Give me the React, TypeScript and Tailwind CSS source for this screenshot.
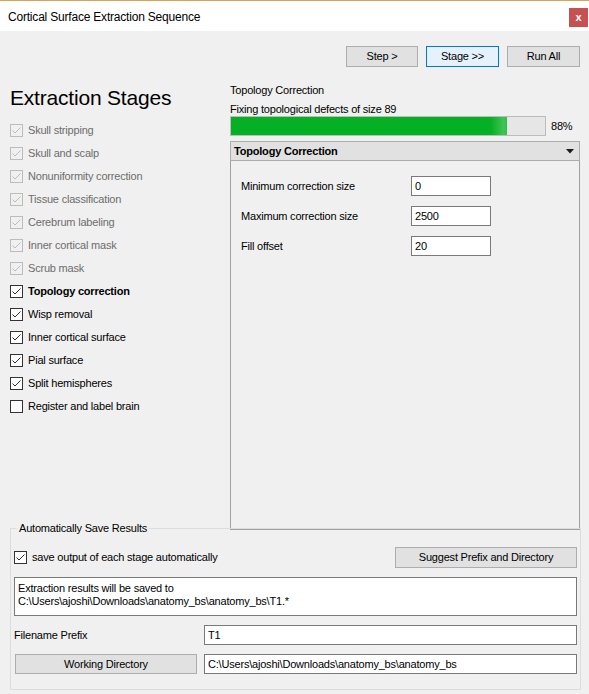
import clsx from "clsx";

const FONT = { fontFamily: '"Liberation Sans", Arial, sans-serif' };

type Stage = { label: string; done?: boolean; checked: boolean; current?: boolean };

const stages: Stage[] = [
  { label: "Skull stripping", done: true, checked: true },
  { label: "Skull and scalp", done: true, checked: true },
  { label: "Nonuniformity correction", done: true, checked: true },
  { label: "Tissue classification", done: true, checked: true },
  { label: "Cerebrum labeling", done: true, checked: true },
  { label: "Inner cortical mask", done: true, checked: true },
  { label: "Scrub mask", done: true, checked: true },
  { label: "Topology correction", checked: true, current: true },
  { label: "Wisp removal", checked: true },
  { label: "Inner cortical surface", checked: true },
  { label: "Pial surface", checked: true },
  { label: "Split hemispheres", checked: true },
  { label: "Register and label brain", checked: false },
];

const params = [
  { label: "Minimum correction size", value: "0" },
  { label: "Maximum correction size", value: "2500" },
  { label: "Fill offset", value: "20" },
];

function CheckBox({ checked, disabled }: { checked: boolean; disabled?: boolean }) {
  return (
    <span
      className={clsx(
        "flex h-[13px] w-[13px] shrink-0 items-center justify-center border",
        disabled ? "border-[#bcbcbc] bg-[#f0f0f0]" : "border-[#333333] bg-white"
      )}
    >
      {checked && (
        <svg width="11" height="11" viewBox="0 0 11 11" aria-hidden>
          <path
            d="M1.5 5.5 4 8l5.5-5.5"
            fill="none"
            stroke={disabled ? "#bcbcbc" : "#333333"}
            strokeWidth="1"
          />
        </svg>
      )}
    </span>
  );
}

function Button({
  children,
  className,
  focused,
}: {
  children: React.ReactNode;
  className?: string;
  focused?: boolean;
}) {
  return (
    <button
      className={clsx(
        "flex shrink-0 items-center justify-center border text-[11px] text-black",
        focused ? "border-[#0078d7] bg-[#e5f1fb]" : "border-[#adadad] bg-[#e1e1e1]",
        className
      )}
    >
      {children}
    </button>
  );
}

function Field({ value, className }: { value: string; className?: string }) {
  return (
    <div
      className={clsx(
        "flex h-[20px] items-center border border-[#7a7a7a] bg-white px-[3px] text-[11px] text-black",
        className
      )}
    >
      {value}
    </div>
  );
}

export default function App() {
  return (
    <div
      className="flex h-[694px] w-[589px] flex-col overflow-hidden bg-[#f0f0f0] text-[11px] tracking-[-0.2px] text-black"
      style={FONT}
    >
      {/* window title bar */}
      <div className="flex h-[31px] shrink-0 border-t border-[#d7a45b] bg-white">
        <span className="mt-[8px] pl-[8px] text-[12px] leading-[16px]">
          Cortical Surface Extraction Sequence
        </span>
        <span className="ml-auto mr-[1px] mt-[7px] flex h-[19px] w-[19px] items-center justify-center bg-[#c75050] text-[11px] font-bold leading-none text-white">
          x
        </span>
      </div>

      {/* run controls */}
      <div className="mt-[15px] flex h-[21px] justify-end gap-[8px] pr-[9px]">
        <Button className="w-[72px]">Step &gt;</Button>
        <Button className="w-[73px]" focused>
          Stage &gt;&gt;
        </Button>
        <Button className="w-[73px]">Run All</Button>
      </div>

      <div className="mt-[13px] flex h-[450px]">
        {/* stage list */}
        <div className="w-[230px] shrink-0 pl-[10px]">
          <h1 className="mt-[6px] text-[21px] leading-[24px] tracking-[-0.2px]">Extraction Stages</h1>
          <ul className="mt-[9px]">
            {stages.map((s) => (
              <li key={s.label} className="flex h-[23px] items-center gap-[5px]">
                <CheckBox checked={s.checked} disabled={s.done} />
                <span
                  className={clsx(
                    s.done && "text-[#6d6d6d]",
                    s.current && "font-bold"
                  )}
                >
                  {s.label}
                </span>
              </li>
            ))}
          </ul>
        </div>

        {/* current stage */}
        <div className="flex w-[350px] shrink-0 flex-col pt-[2px]">
          <div className="leading-[16px]">Topology Correction</div>
          <div className="mt-[4px] leading-[14px]">Fixing topological defects of size 89</div>
          <div className="flex h-[20px] items-center">
            <div className="h-[20px] w-[316px] border border-[#bcbcbc] bg-[#e6e6e6]">
              <div className="flex h-full w-[276px] justify-end bg-[#06b025]">
                <div className="h-full w-[16px] bg-[linear-gradient(to_right,#06b025,#3fc455_80%,#2fbd47)]" />
              </div>
            </div>
            <span className="ml-[5px]">88%</span>
          </div>

          <div className="mt-[5px] flex h-[20px] items-center justify-between border border-[#adadad] bg-[#e1e1e1] pl-[3px] pr-[5px]">
            <span className="font-bold">Topology Correction</span>
            <svg width="8" height="5" viewBox="0 0 8 5" aria-hidden>
              <path d="M0 0h8L4 4.5z" fill="#1a1a1a" />
            </svg>
          </div>

          <div className="flex flex-1 flex-col gap-[10px] border-x border-b border-[#a0a0a0] pl-[10px] pt-[15px]">
            {params.map((p) => (
              <div key={p.label} className="flex h-[20px] items-center">
                <span className="w-[170px] shrink-0">{p.label}</span>
                <Field value={p.value} className="w-[80px]" />
              </div>
            ))}
          </div>
        </div>
      </div>

      {/* save options group */}
      <div className="relative -mt-[2px] ml-[10px] w-[571px] border border-[#dcdcdc] px-[3px] pb-[15px] pt-[18px]">
        <span className="absolute -top-[8px] left-[6px] bg-[#f0f0f0] px-[2px] leading-[14px]">
          Automatically Save Results
        </span>

        <div className="flex h-[21px] items-center">
          <CheckBox checked />
          <span className="ml-[5px]">save output of each stage automatically</span>
          <Button className="ml-auto h-[21px] w-[182px]">Suggest Prefix and Directory</Button>
        </div>

        <div className="mt-[9px] h-[39px] border border-[#7a7a7a] bg-white px-[3px] pt-[4px] leading-[13px]">
          <div>Extraction results will be saved to</div>
          <div>C:\Users\ajoshi\Downloads\anatomy_bs\anatomy_bs\T1.*</div>
        </div>

        <div className="mt-[9px] flex h-[20px] items-center">
          <span className="w-[190px] shrink-0">Filename Prefix</span>
          <Field value="T1" className="flex-1" />
        </div>

        <div className="mt-[9px] flex h-[20px] items-center">
          <Button className="ml-[1px] h-[20px] w-[182px]">Working Directory</Button>
          <Field
            value="C:\Users\ajoshi\Downloads\anatomy_bs\anatomy_bs"
            className="ml-[7px] flex-1"
          />
        </div>
      </div>
    </div>
  );
}
